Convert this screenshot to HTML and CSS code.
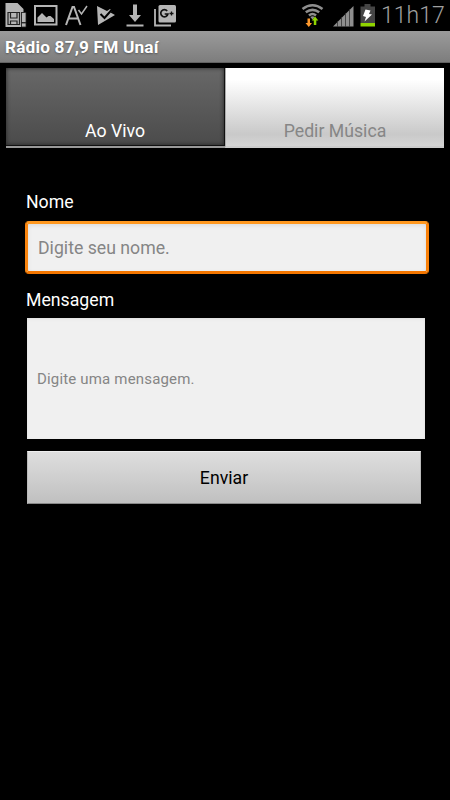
FILE: index.html
```html
<!DOCTYPE html>
<html lang="pt-BR">
<head>
    <meta charset="UTF-8">
    <meta name="viewport" content="width=device-width, initial-scale=1.0">
    <title>Rádio 87,9 FM Unaí</title>
    <link rel="stylesheet" href="styles.css">
</head>
<body>
    <div class="status-bar">
        <div class="status-icons">
            <!-- sd card -->
            <svg width="22" height="26" viewBox="0 0 22 26">
                <path fill="#b5b5b5" d="M.5 3h12l6 6v3h-2.500v15H.5z"/>
                <path fill="none" stroke="#222" stroke-width="1.2" d="M3 12.500h11.500v12H3zM5.500 12.500v5.500H12v-5.500M5.500 24.500V21H12v3.500"/>
                <path fill="#b5b5b5" stroke="#222" stroke-width=".8" d="M16.500 12.500h4.500v10h-4.500zM16.500 23h4.500v4h-4.500z"/>
            </svg>
            <!-- picture -->
            <svg width="24" height="26" viewBox="0 0 24 26">
                <path fill="none" stroke="#b5b5b5" stroke-width="2" d="M1 6h21.500v18.500H1z"/>
                <path fill="#b5b5b5" d="M3.500 22v-4.500l4.500-4.500 4.500 4.500 2-1.500h2l3.500 3v3z"/>
            </svg>
            <!-- spell check -->
            <svg width="23" height="26" viewBox="0 0 23 26">
                <path fill="none" stroke="#b5b5b5" stroke-width="2" d="M1 25L7.500 7h1.500L15.500 25M4 18.500h9"/>
                <path fill="none" stroke="#b5b5b5" stroke-width="1.500" d="M13.500 10l3 4 5.500-8"/>
            </svg>
            <!-- play store -->
            <svg class="play" width="19" height="26" viewBox="0 0 19 26">
                <path fill="#b5b5b5" d="M0 6l10 5 3-2 2 1.500-1.500 2L18 15 1 25z"/>
                <path fill="none" stroke="#000" stroke-width="2" d="M3.500 14l4 4 7.500-8.500"/>
            </svg>
            <!-- download -->
            <svg class="download" width="18" height="26" viewBox="0 0 18 26">
                <path fill="#b5b5b5" d="M7 4.500h4V15h4l-6 7-6-7h4zM.5 24.500h17v2H.5z"/>
            </svg>
            <!-- google plus -->
            <svg class="google-plus" width="22" height="26" viewBox="0 0 22 26">
                <path fill="none" stroke="#b5b5b5" stroke-width="1.800" d="M1 9v16.500h16"/>
                <rect x="4.500" y="5" width="17.500" height="17.500" rx="1.500" fill="#b5b5b5"/>
                <path fill="none" stroke="#111" stroke-width="1.700" d="M13.200 11a3.600 3.600 0 1 0 .7 3h-3.200"/>
                <path stroke="#111" stroke-width="1.300" d="M15.500 13.500h4M17.500 11.500v4"/>
            </svg>
        </div>
        <div class="status-info">
            <!-- wifi -->
            <svg width="22" height="26" viewBox="0 0 22 26">
                <path fill="none" stroke="#8e8e8e" stroke-width="2.600" d="M.5 9q10-7.500 20 0M3.800 12.300q6.700-5 13.400 0M7 15.500q3.500-3 7 0"/>
                <path fill="#8e8e8e" d="M8.300 17q2.200-1.500 4.400 0L10.500 19.500z"/>
                <path fill="#ff9a2e" d="M5.500 18.500h2.500V23h2L6.800 27 3.500 23h2z"/>
                <path fill="#8fd400" d="M11.800 25v-4.500h-2L13 16.500l3.300 4h-2V25z"/>
            </svg>
            <!-- signal -->
            <svg class="signal" width="21" height="26" viewBox="0 0 21 26">
                <path fill="#8e8e8e" d="M0 26.500L20.500 6v20.500z"/>
                <path stroke="#333" stroke-width=".8" d="M4.500 21v6M8.500 17v10M12.500 13v14M16.500 9v18"/>
            </svg>
            <!-- battery -->
            <svg class="battery" width="16" height="26" viewBox="0 0 16 26">
                <path fill="#454545" d="M4.500 4h6v2.500h4.500V23H.5V6.500h4z"/>
                <path fill="#8fd400" d="M.5 23H15v3.500H.5z"/>
                <path fill="#fff" d="M5.500 9.500l5 1-1.500 3.500 3 .5-7.500 7 1.500-4.500-3-1z"/>
            </svg>
            <span class="clock">11h17</span>
        </div>
    </div>

    <div class="title-bar">Rádio 87,9 FM Unaí</div>

    <div class="tabs">
        <div class="tab tab-live">Ao Vivo</div>
        <div class="tab tab-request">Pedir Música</div>
    </div>

    <form class="request-form">
        <label class="label" for="nome">Nome</label>
        <input class="field name-field" id="nome" type="text" placeholder="Digite seu nome.">
        <label class="label message-label" for="mensagem">Mensagem</label>
        <input class="field message-field" id="mensagem" type="text" placeholder="Digite uma mensagem.">
        <button class="send-button" type="button">Enviar</button>
    </form>
</body>
</html>
```
FILE: styles.css
```css
* {
    box-sizing: border-box;
}

body {
    margin: 0;
    height: 800px;
    background-color: #000;
    color: #fff;
    font-family: Roboto, "Liberation Sans", sans-serif;
    font-size: 17.7px;
    overflow: hidden;
}

.status-bar {
    display: flex;
    justify-content: space-between;
    height: 31px;
    padding: 0 6px 0 5px;
}

.status-bar svg {
    display: block;
    flex: none;
    overflow: visible;
}

.status-icons {
    display: flex;
    gap: 7px;
}

.status-icons .play {
    margin-left: 2px;
}

.status-icons .download {
    margin-left: 3px;
}

.status-icons .google-plus {
    margin-left: 3px;
}

.status-info {
    display: flex;
}

.signal {
    margin-left: 9px;
}

.battery {
    margin-left: 6px;
}

.clock {
    width: 63px;
    margin-left: 5px;
    color: #a0a0a0;
    font-size: 23px;
    font-weight: 300;
    line-height: 31px;
    white-space: nowrap;
}

.title-bar {
    height: 32px;
    padding-left: 5px;
    background: linear-gradient(#9b9b9b, #7d7d7d);
    border-bottom: 1px solid #626262;
    font-size: 17.3px;
    font-weight: bold;
    letter-spacing: 0.15px;
    line-height: 32px;
    text-shadow: 0 1px 2px #555;
}

.tabs {
    display: flex;
    height: 80px;
    margin: 5px 6px 0;
}

.tab {
    flex: 1;
    padding-top: 52px;
    line-height: 22px;
    text-align: center;
}

.tab-live {
    height: 77px;
    background: linear-gradient(#686868, #4b4b4b);
    border-right: 1px solid #111;
    box-shadow: inset 0 0 4px #222, 0 1px #111, 0 3px #999;
}

.tab-request {
    background: linear-gradient(#fff 15%, #c9c9c9 85%, #d5d5d5);
    border-left: 1px solid #aaa;
    border-bottom: 2px solid #ccc;
    color: #868686;
}

.request-form {
    display: flex;
    flex-direction: column;
    align-items: flex-start;
    padding: 43px 21px 0 25px;
}

.label {
    margin-left: 1px;
    line-height: 22px;
}

.field {
    display: block;
    background-color: #f0f0f0;
    font-family: inherit;
    outline: none;
}

.field::placeholder {
    color: #858585;
}

.name-field {
    width: 404px;
    height: 53px;
    margin-top: 8px;
    padding: 0 10px;
    border: 3px solid;
    border-color: #ff981f #f98008 #f47600 #fa850f;
    border-radius: 4px;
    box-shadow: inset 0 2px 4px #ddd;
    font-size: 17.7px;
}

.message-label {
    margin-top: 15px;
}

.message-field {
    width: 398px;
    height: 121px;
    margin: 7px 0 0 2px;
    padding: 0 10px;
    border: 0;
    box-shadow: inset 0 1px 3px #ddd;
    font-size: 15px;
    letter-spacing: 0.17px;
}

.send-button {
    width: 394px;
    height: 53px;
    margin: 12px 0 0 2px;
    border: 1px solid;
    border-color: #eee #bbb #888 #bbb;
    background: linear-gradient(#dedede, #c0c0c0);
    color: #000;
    font-family: inherit;
    font-size: 17.7px;
}
```
